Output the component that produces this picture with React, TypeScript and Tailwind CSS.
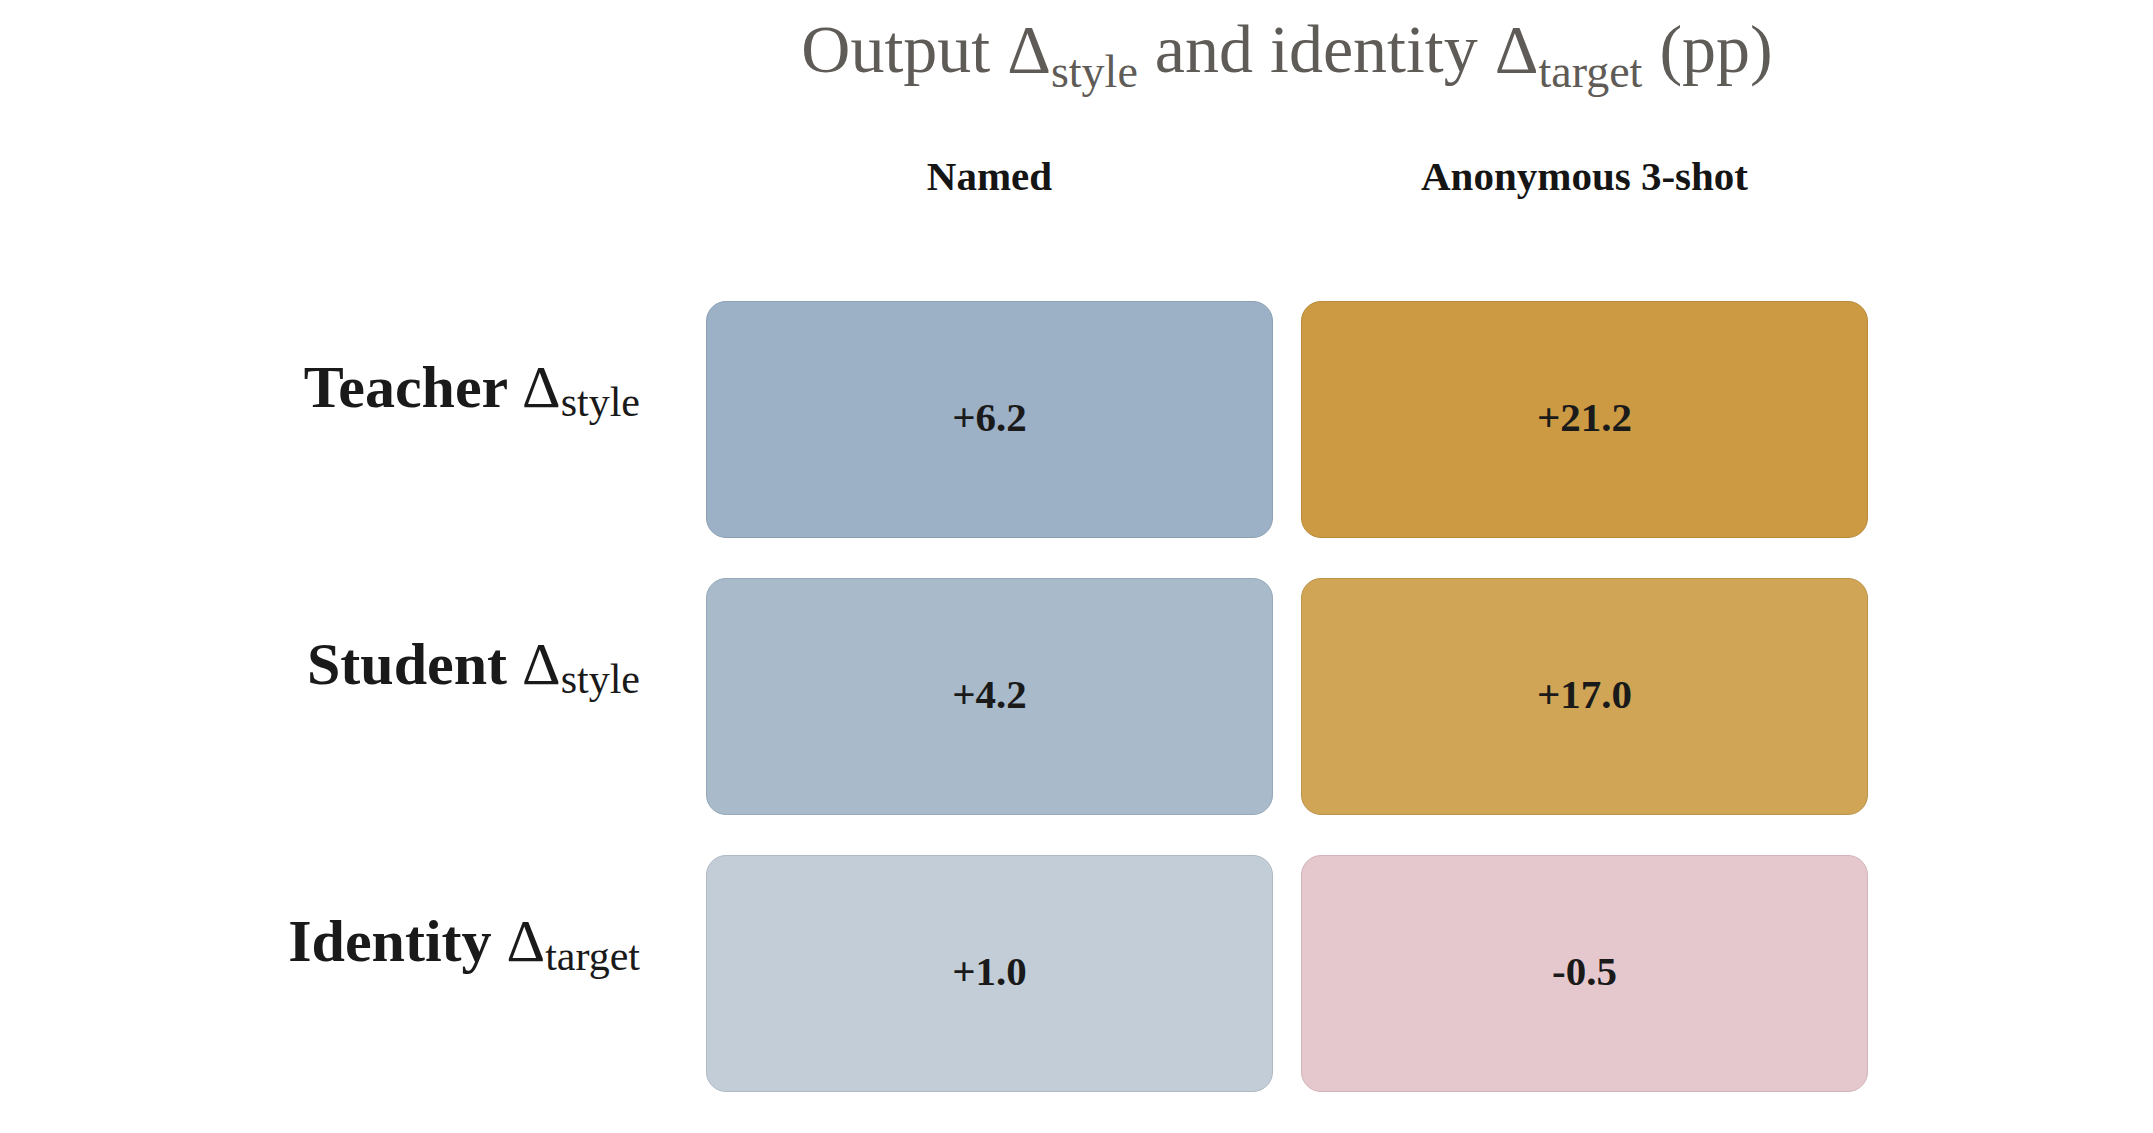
import React from "react";

const rows = [
  {
    label: "Teacher",
    sub: "style",
    cells: [
      { v: "+6.2", cls: "bg-[#9db1c6] border-[#8ca1b6]" },
      { v: "+21.2", cls: "bg-[#cb9a42] border-[#b88a3a]" },
    ],
  },
  {
    label: "Student",
    sub: "style",
    cells: [
      { v: "+4.2", cls: "bg-[#a9bbcb] border-[#96a9ba]" },
      { v: "+17.0", cls: "bg-[#d0a656] border-[#bb934a]" },
    ],
  },
  {
    label: "Identity",
    sub: "target",
    cells: [
      { v: "+1.0", cls: "bg-[#c3cdd7] border-[#afbac5]" },
      { v: "-0.5", cls: "bg-[#e5c8cd] border-[#d2b4ba]" },
    ],
  },
];

export default function App() {
  return (
    <div
      className="w-[2153px] h-[1133px] bg-white overflow-hidden"
      style={{ fontFamily: '"Liberation Serif", "Times New Roman", serif' }}
    >
      <div className="pt-[15px] pl-[706px] w-[1868px]">
        <div className="h-[68px] flex justify-center text-[68px] leading-none text-[#5f5b57] whitespace-nowrap">
          <span>
            Output Δ<span className="relative top-[15px] text-[46px] leading-none">style</span> and identity Δ
            <span className="relative top-[15px] text-[46px] leading-none">target</span> (pp)
          </span>
        </div>
      </div>

      <div className="mt-[73px] pl-[706px] flex gap-[28px]">
        <div className="w-[567px] h-[41px] text-center text-[41px] font-bold leading-none text-[#151515]">Named</div>
        <div className="w-[567px] h-[41px] text-center text-[41px] font-bold leading-none text-[#151515] whitespace-nowrap">
          Anonymous 3-shot
        </div>
      </div>

      <div className="mt-[104px] flex flex-col gap-[40px]">
        {rows.map((r) => (
          <div key={r.label} className="flex h-[237px]">
            <div className="w-[640px] pt-[56px] text-right text-[60px] leading-none font-bold text-[#1a1a1a] whitespace-nowrap">
              {r.label} <span className="font-normal">Δ</span>
              <span className="relative top-[9px] text-[42px] font-normal leading-none">{r.sub}</span>
            </div>
            <div className="ml-[66px] flex gap-[28px]">
              {r.cells.map((c, i) => (
                <div
                  key={i}
                  className={`w-[567px] h-[237px] pb-[5px] rounded-[20px] border-[1.5px] flex items-center justify-center ${c.cls}`}
                >
                  <span className="text-[41px] font-bold leading-none text-[#1a1a1a]">{c.v}</span>
                </div>
              ))}
            </div>
          </div>
        ))}
      </div>
    </div>
  );
}
